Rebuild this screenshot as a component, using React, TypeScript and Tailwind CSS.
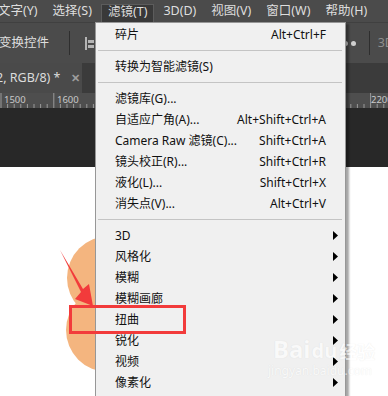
import React from 'react';

type Row = { t: string; k?: string; sub?: boolean } | 'sep';

const rows: Row[] = [
  { t: '碎片', k: 'Alt+Ctrl+F' },
  'sep',
  { t: '转换为智能滤镜(S)' },
  'sep',
  { t: '滤镜库(G)...' },
  { t: '自适应广角(A)...', k: 'Alt+Shift+Ctrl+A' },
  { t: 'Camera Raw 滤镜(C)...', k: 'Shift+Ctrl+A' },
  { t: '镜头校正(R)...', k: 'Shift+Ctrl+R' },
  { t: '液化(L)...', k: 'Shift+Ctrl+X' },
  { t: '消失点(V)...', k: 'Alt+Ctrl+V' },
  'sep',
  { t: '3D', sub: true },
  { t: '风格化', sub: true },
  { t: '模糊', sub: true },
  { t: '模糊画廊', sub: true },
  { t: '扭曲', sub: true },
  { t: '锐化', sub: true },
  { t: '视频', sub: true },
  { t: '像素化', sub: true },
];

const font = { fontFamily: '"Noto Sans", "Noto Sans CJK SC", sans-serif' };

const Ruler = ({ labels }: { labels: { x: number; n: string }[] }) => (
  <svg width="388" height="15" className="block">
    {Array.from({ length: 66 }).map((_, i) => {
      const x = 1 + i * 6.6;
      const major = i % 8 === 0;
      return <line key={i} x1={x} x2={x} y1={major ? 0 : 11} y2={15} stroke="#9a9a9a" strokeWidth="1" />;
    })}
    {labels.map((l) => (
      <text key={l.n} x={l.x} y={10} fontSize="9.5" fill="#c9c9c9" fontFamily="Noto Sans, sans-serif">
        {l.n}
      </text>
    ))}
  </svg>
);

const FilterMenu = () => (
  <div className="absolute left-[95px] top-[22px] w-[251px] bottom-[-20px] bg-[#f0f0f0] border border-[#979797] pt-[1px] shadow-[3px_2px_2px_rgba(0,0,0,0.35)] text-[12px] text-[#111]">
    {rows.map((r, i) =>
      r === 'sep' ? (
        <div key={i} className="h-[11px] flex items-center">
          <div className="h-px flex-1 ml-[2px] mr-[3px] bg-[#c4c4c4]" />
        </div>
      ) : (
        <div key={i} className="relative h-[21px] flex items-center justify-between pl-[19px] pr-[19px]">
          <span>{r.t}</span>
          {r.k && <span>{r.k}</span>}
          {r.sub && (
            <svg width="5" height="9" viewBox="0 0 5 9" className="absolute right-[7px] top-[6px]">
              <polygon points="0,0 5,4.5 0,9" fill="#000" />
            </svg>
          )}
        </div>
      )
    )}
  </div>
);

export default function App() {
  const menus = ['文字(Y)', '选择(S)', '滤镜(T)', '3D(D)', '视图(V)', '窗口(W)', '帮助(H)'];

  return (
    <div className="relative w-[388px] h-[396px] overflow-hidden bg-white flex flex-col" style={font}>
      {/* menu bar */}
      <div className="h-[22px] bg-[#4b4b4b] flex items-center gap-[15px] pl-0 ml-[-2px] text-[12.5px] text-[#dedede]">
        {menus.map((m) => (
          <span
            key={m}
            className={
              m === '滤镜(T)'
                ? 'relative -mx-[6px] px-[6px] h-[19px] mt-[4px] pb-[3px] flex items-center bg-[#393939] border border-b-0 border-[#5c5c5c]'
                : ''
            }
          >
            {m}
          </span>
        ))}
      </div>

      {/* options bar */}
      <div className="h-[41px] bg-[#4b4b4b] border-t border-[#404040] flex items-center text-[12.5px] text-[#dedede]">
        <span className="ml-[-1px]">变换控件</span>
        <div className="ml-[20px] w-px h-[24px] bg-[#2e2e2e]" />
        <svg width="9" height="13" viewBox="0 0 9 13" className="ml-[15px]">
          <rect x="0" y="0" width="2" height="13" fill="#b5b5b5" />
          <rect x="3" y="3" width="6" height="3" fill="#b5b5b5" />
          <rect x="3" y="8" width="6" height="3" fill="#b5b5b5" />
        </svg>
        <div className="ml-auto flex items-center">
          <span className="w-[5px] h-[5px] rounded-full bg-[#cfcfcf]" />
          <span className="ml-[3px] w-[5px] h-[5px] rounded-full bg-[#cfcfcf]" />
          <div className="ml-[13px] w-px h-[24px] bg-[#2e2e2e]" />
          <span className="ml-[8px] mr-[-6px] text-[#8e8e8e]">3D</span>
        </div>
      </div>

      {/* tab row */}
      <div className="h-[30px] bg-[#3b3b3b] flex">
        <div className="w-[82px] bg-[#4a4a4a] flex items-center text-[12.5px] text-[#dcdcdc]">
          <span className="ml-[-4px]">2, RGB/8) *</span>
          <span className="ml-[11px] text-[11px] font-bold text-[#9d9d9d]">✕</span>
        </div>
      </div>

      {/* ruler */}
      <div className="h-[15px] bg-[#4e4e4e] overflow-hidden">
        <Ruler labels={[{ x: 4, n: '1500' }, { x: 57, n: '1600' }, { x: 371, n: '2200' }]} />
      </div>

      {/* pasteboard */}
      <div className="h-[59px] bg-[#282828]" />

      {/* canvas */}
      <div className="relative flex-1 bg-white">
        <div className="absolute left-[67px] top-[69px] w-[84px] h-[84px] rounded-full bg-[#f4b57f]" />
        <div className="absolute left-[66px] top-[121px] w-[84px] h-[84px] rounded-full bg-[#f4b57f]" />
      </div>

      <FilterMenu />

      {/* annotations */}
      <div className="absolute left-[69px] top-[305px] w-[117px] h-[29px] border-[3px] border-[#f23b3b]" />
      <svg className="absolute left-0 top-0 pointer-events-none" width="388" height="396">
        <polygon points="60,250 83,289 89,284 93,306 75,299 81,292" fill="#f23b3b" />
      </svg>

      {/* watermark */}
      <div className="absolute left-[273px] top-[337px] text-white leading-none opacity-60 [text-shadow:0_0_1px_rgba(0,0,0,0.15)]">
        <div className="flex items-end">
          <span className="text-[24px] font-bold">Bai</span>
          <span className="text-[20px] font-bold ml-[1px]">du</span>
          <span className="text-[18px] font-bold ml-[2px]">经验</span>
        </div>
        <div className="text-[12px] mt-[4px] ml-[-5px]">jingyan.baidu.com</div>
      </div>
    </div>
  );
}
